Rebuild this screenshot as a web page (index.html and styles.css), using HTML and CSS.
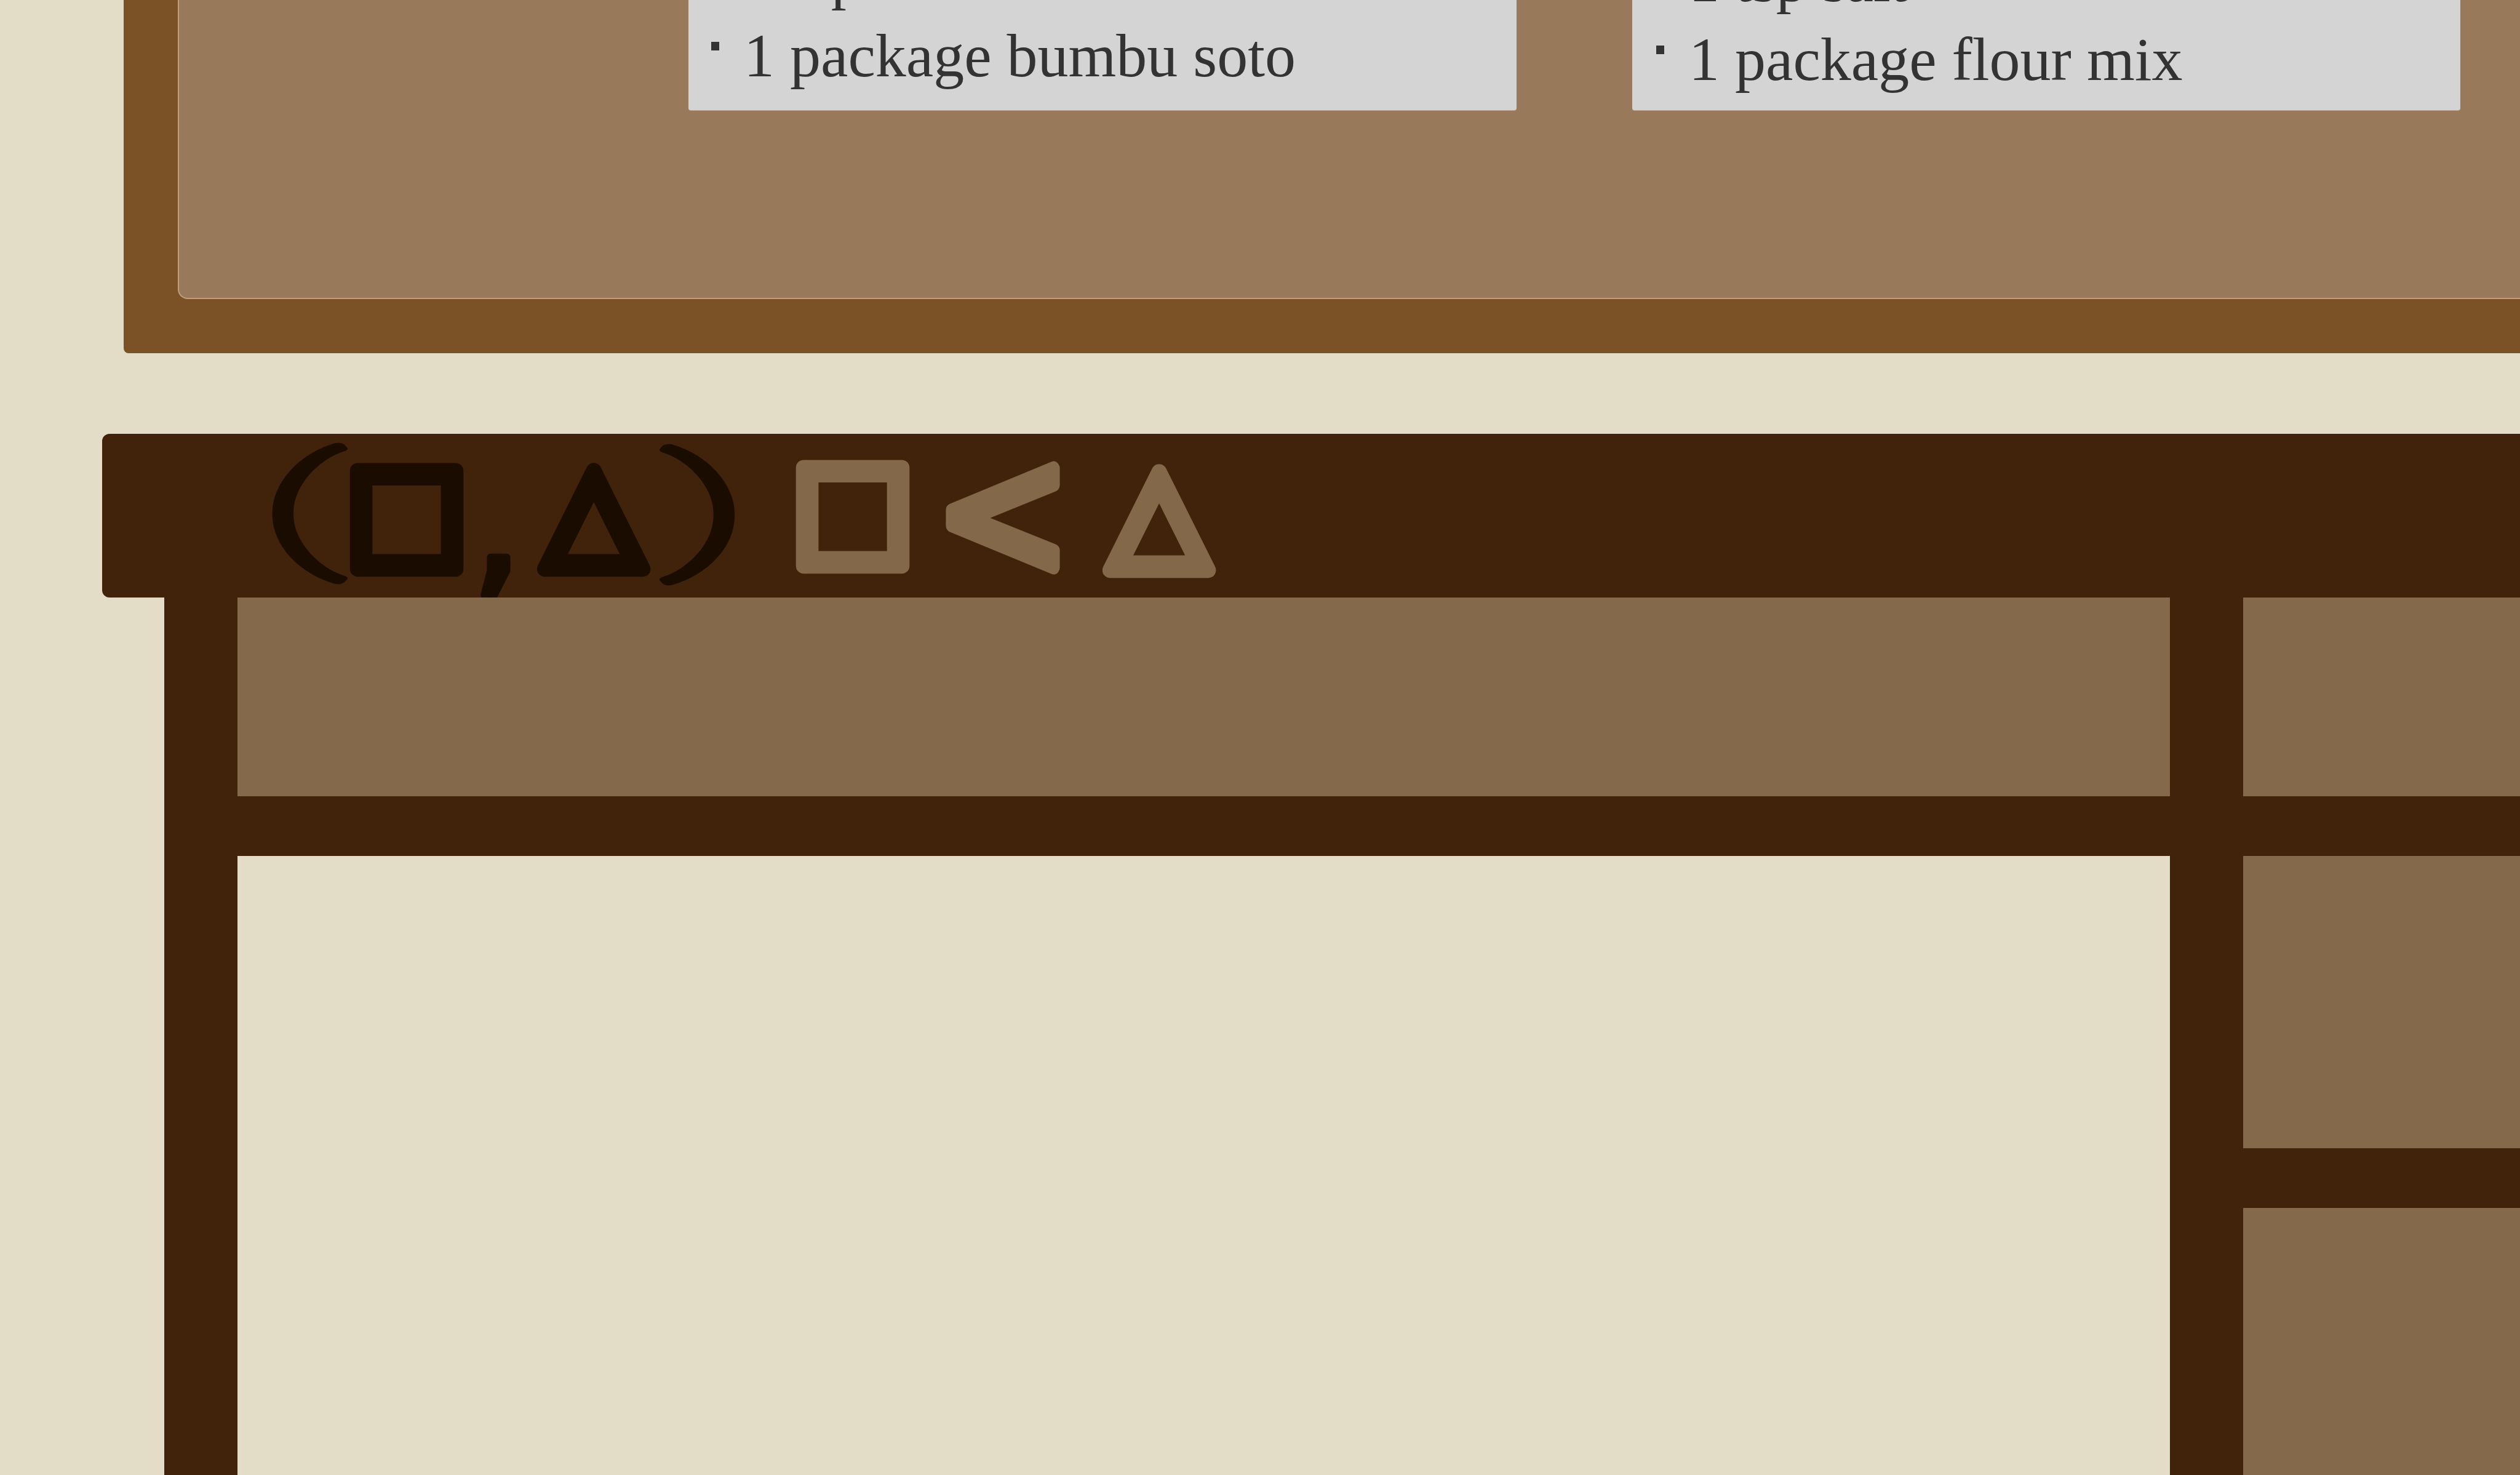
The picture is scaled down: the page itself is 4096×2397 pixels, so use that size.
FILE: index.html
```html
<!DOCTYPE html>
<html lang="en">
<head>
<meta charset="utf-8">
<title>Recipe board</title>
<link rel="stylesheet" href="styles.css">
</head>
<body>
<main class="page">
  <section class="board">
    <div class="board-inner">
      <div class="cards">
        <article class="card">
          <h3 class="card-title">Soto Ayam</h3>
          <ul class="ingredients">
            <li>2 stalks lemongrass</li>
            <li>1 tsp salt</li>
            <li>1 package bumbu soto</li>
          </ul>
        </article>
        <article class="card card-offset">
          <h3 class="card-title">Fried Chicken</h3>
          <ul class="ingredients">
            <li>2 eggs</li>
            <li>1 tsp salt</li>
            <li>1 package flour mix</li>
          </ul>
        </article>
      </div>
    </div>
  </section>

  <section class="desk">
    <div class="desk-top">
      <svg class="logo" width="1580" height="266" viewBox="0 0 1580 266" role="img" aria-label="(□,△)□&lt;△">
        <g class="logo-dark">
          <text class="g-paren" transform="translate(69.6 0) scale(2.21 1)" x="0" y="190" text-anchor="middle">(</text>
          <text class="g-shape" x="241" y="194" text-anchor="middle">□</text>
          <text class="g-comma" x="388" y="232" text-anchor="middle">,</text>
          <text class="g-shape" x="545" y="194" text-anchor="middle">△</text>
          <text class="g-paren" transform="translate(728.5 0) scale(2.21 1)" x="0" y="192" text-anchor="middle">)</text>
        </g>
        <g class="logo-light">
          <text class="g-shape" x="966" y="189" text-anchor="middle">□</text>
          <text class="g-less" transform="translate(1210 134) scale(1 1.14)" x="0" y="85" text-anchor="middle">&lt;</text>
          <text class="g-shape" x="1464" y="196" text-anchor="middle">△</text>
        </g>
      </svg>
    </div>
    <div class="desk-body">
      <div class="leg"></div>
      <div class="desk-center">
        <div class="drawer drawer-top"></div>
        <div class="rail"></div>
        <div class="knee"></div>
      </div>
      <div class="leg"></div>
      <div class="desk-side">
        <div class="drawer drawer-top"></div>
        <div class="rail"></div>
        <div class="drawer drawer-mid"></div>
        <div class="rail"></div>
        <div class="drawer drawer-low"></div>
      </div>
    </div>
  </section>
</main>
</body>
</html>
```

FILE: styles.css
```css
html, body {
  margin: 0;
  padding: 0;
}

body {
  background: #e3ddc7;
  overflow: hidden;
  height: 2397px;
  font-family: "Liberation Serif", "Times New Roman", serif;
}

.page {
  display: flex;
  flex-direction: column;
  width: 4600px;
}

/* ---------- board ---------- */
.board {
  margin: -597px 0 0 201px;
  padding: 88px 0 88px 88px;
  background: #7b5126;
  border-radius: 8px;
  width: 4200px;
}

.board-inner {
  background: #98795a;
  border: 2px solid #bf9f7c;
  border-right: none;
  border-radius: 16px 0 0 16px;
  padding: 88px 0 305px 828px;
}

.cards {
  display: flex;
  align-items: stretch;
  gap: 188px;
}

.card {
  width: 1346px;
  background: #d4d4d4;
  border-radius: 4px;
  padding: 42px 30px 24px 37px;
  box-sizing: border-box;
  color: #333333;
  box-shadow: 0 1px 0 #b9a58f;
}

.card-offset {
  padding-top: 48px;
  padding-bottom: 18px;
  padding-left: 39px;
}

.card-title {
  margin: 0 0 20px;
  font-size: 100px;
  line-height: 128px;
  font-weight: normal;
}

.ingredients {
  list-style: none;
  margin: 0;
  padding: 0;
  font-size: 100px;
  line-height: 128px;
}

.ingredients li::before {
  content: "";
  display: inline-block;
  width: 13px;
  height: 14px;
  background: #333333;
  margin: 0 40px 42px 0;
  vertical-align: baseline;
}

/* ---------- desk ---------- */
.desk {
  margin: 131px 0 0 166px;
  display: flex;
  flex-direction: column;
}

.desk-top {
  height: 266px;
  background: #40230a;
  border-radius: 12px 0 0 12px;
  display: flex;
  align-items: center;
  padding-left: 254px;
}

.logo {
  display: block;
  flex: none;
  font-family: "DejaVu Sans", sans-serif;
  font-weight: normal;
}

.logo text {
  stroke-linejoin: round;
  stroke-linecap: round;
  paint-order: stroke;
}

.logo-dark text {
  fill: #1b0c00;
  stroke: #1b0c00;
}

.logo-light text {
  fill: #83684a;
  stroke: #83684a;
}

.logo .g-paren {
  font-family: "Roboto", sans-serif;
  font-weight: 100;
  font-size: 215px;
  stroke-width: 17px;
  vector-effect: non-scaling-stroke;
}

.g-shape {
  font-size: 209px;
  stroke-width: 25px;
}

.g-comma {
  font-size: 255px;
  stroke-width: 12px;
}

.g-less {
  font-size: 264px;
  stroke-width: 20px;
}

.desk-body {
  display: grid;
  grid-template-columns: 119px 3141px 119px 800px;
  margin-left: 101px;
  height: 1427px;
}

.leg {
  background: #40230a;
}

.desk-center,
.desk-side {
  display: flex;
  flex-direction: column;
}

.desk-side {
  background: #40230a;
}

.drawer {
  background: #84694b;
}

.drawer-top {
  height: 323px;
}

.drawer-mid {
  height: 475px;
}

.drawer-low {
  flex: 1;
}

.rail {
  height: 97px;
  background: #40230a;
  flex: none;
}

.knee {
  flex: 1;
}
```
